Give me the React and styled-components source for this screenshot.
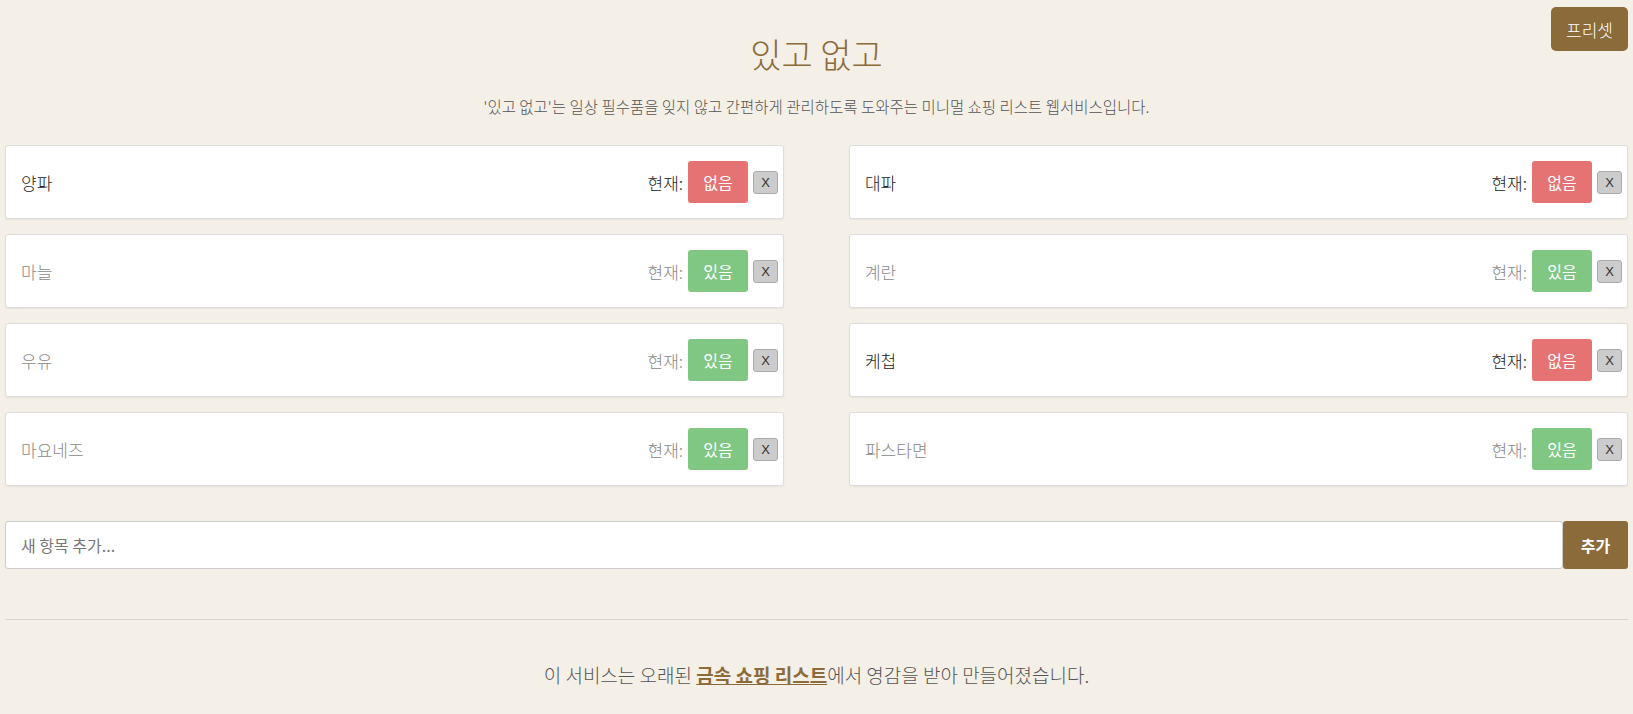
import styled, { createGlobalStyle } from "styled-components";

const GlobalStyle = createGlobalStyle`
    body {
        margin: 0;
        background: #f4efe7;
        font-family: "Noto Sans CJK KR", "Noto Sans", sans-serif;
        color: #333;
    }
`;

const Page = styled.div`
    padding: 35px 5px 0;
    position: relative;
`;

const PresetButton = styled.button`
    position: absolute;
    top: 7px;
    right: 5px;
    width: 77px;
    height: 44px;
    background: #8b6b3a;
    color: #fff;
    border: none;
    border-radius: 5px;
    font-family: inherit;
    font-size: 17px;
    font-weight: 300;
`;

const Title = styled.h1`
    margin: 0;
    text-align: center;
    font-weight: 300;
    font-size: 34px;
    line-height: 38px;
    color: #8b6b3a;
`;

const Subtitle = styled.p`
    margin: 23px 0 0;
    text-align: center;
    font-size: 15.5px;
    font-weight: 300;
    line-height: 20px;
    color: #555;
`;

const ItemGrid = styled.div`
    margin-top: 29px;
    display: flex;
    flex-wrap: wrap;
    justify-content: space-between;
    row-gap: 15px;
`;

const Card = styled.div`
    width: 48%;
    box-sizing: border-box;
    height: 74px;
    display: flex;
    align-items: center;
    padding: 0 5px 0 15px;
    background: #fff;
    border: 1px solid #ddd;
    border-radius: 3px;
    box-shadow: 0 1px 2px rgba(0, 0, 0, 0.06);
    color: ${({ $has }) => ($has ? "#888" : "#222")};
    font-size: 17px;
    font-weight: 300;
`;

const ItemName = styled.span`
    flex: 1;
`;

const StatusLabel = styled.span`
    margin-right: 5px;
`;

const StatusButton = styled.button`
    width: 60px;
    height: 42px;
    border: none;
    border-radius: 3px;
    background: ${({ $has }) => ($has ? "#81c784" : "#e57373")};
    color: #fff;
    font-family: inherit;
    font-size: 16px;
    padding: 0;
`;

const RemoveButton = styled.button`
    margin-left: 5px;
    width: 25px;
    height: 23px;
    padding: 0;
    background: #ccc;
    border: 1px solid #aaa;
    border-radius: 3px;
    color: #333;
    font-family: "Liberation Sans", sans-serif;
    font-size: 13px;
`;

const AddRow = styled.form`
    margin-top: 35px;
    display: flex;
    height: 48px;
`;

const AddInput = styled.input`
    flex: 1;
    box-sizing: border-box;
    border: 1px solid #ccc;
    border-radius: 3px;
    padding: 0 15px;
    font-family: inherit;
    font-size: 16px;
    color: #333;
    &::placeholder {
        color: #777;
    }
`;

const AddButton = styled.button`
    width: 65px;
    border: none;
    border-radius: 3px;
    background: #8b6b3a;
    color: #fff;
    font-family: inherit;
    font-weight: bold;
    font-size: 16px;
`;

const Divider = styled.hr`
    margin: 50px 0 0;
    border: none;
    border-top: 1px solid #d8d4cc;
`;

const Footer = styled.p`
    margin: 43px 0 0;
    text-align: center;
    font-size: 19px;
    font-weight: 300;
    line-height: 24px;
    color: #555;
`;

const FooterLink = styled.a`
    color: #8b6b3a;
    font-weight: bold;
    text-decoration: underline;
`;

const items = [
    { name: "양파", has: false },
    { name: "대파", has: false },
    { name: "마늘", has: true },
    { name: "계란", has: true },
    { name: "우유", has: true },
    { name: "케첩", has: false },
    { name: "마요네즈", has: true },
    { name: "파스타면", has: true },
];

const App = () => (
    <Page>
        <GlobalStyle />
        <PresetButton>프리셋</PresetButton>
        <Title>있고 없고</Title>
        <Subtitle>'있고 없고'는 일상 필수품을 잊지 않고 간편하게 관리하도록 도와주는 미니멀 쇼핑 리스트 웹서비스입니다.</Subtitle>
        <ItemGrid>
            {items.map((item) => (
                <Card key={item.name} $has={item.has}>
                    <ItemName>{item.name}</ItemName>
                    <StatusLabel>현재:</StatusLabel>
                    <StatusButton $has={item.has}>{item.has ? "있음" : "없음"}</StatusButton>
                    <RemoveButton>X</RemoveButton>
                </Card>
            ))}
        </ItemGrid>
        <AddRow onSubmit={(e) => e.preventDefault()}>
            <AddInput placeholder="새 항목 추가..." />
            <AddButton>추가</AddButton>
        </AddRow>
        <Divider />
        <Footer>
            이 서비스는 오래된 <FooterLink href="#">금속 쇼핑 리스트</FooterLink>에서 영감을 받아 만들어졌습니다.
        </Footer>
    </Page>
);

export default App;
